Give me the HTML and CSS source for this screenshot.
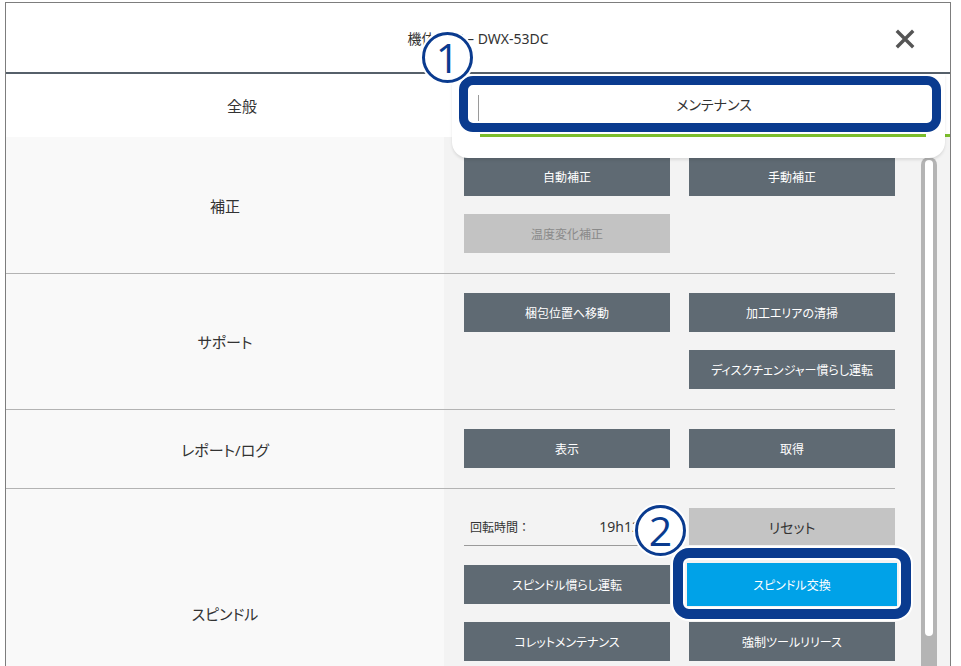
FILE: index.html
```html
<!DOCTYPE html>
<html lang="ja">
<head>
  <meta charset="UTF-8">
  <title>機体設定 - DWX-53DC</title>
  <link rel="stylesheet" href="styles.css">
</head>
<body>
  <div class="window">
    <!-- Title bar -->
    <header class="title-bar">
      <h1>機体設定 – DWX-53DC</h1>
      <button class="close" aria-label="閉じる">
        <svg width="20" height="20" viewBox="0 0 20 20">
          <path d="M3 3 L17 17 M17 3 L3 17" stroke="#555" stroke-width="3.4" stroke-linecap="square"/>
        </svg>
      </button>
    </header>

    <!-- Tabs -->
    <nav class="tabs">
      <div class="tab">全般</div>
      <div class="tab active">
        <span class="callout-panel"><span class="callout-line"></span></span>
        <span class="tab-sep"></span>
        <span class="tab-label">メンテナンス</span>
        <span class="callout-frame"></span>
        <span class="callout-num num-1">1</span>
      </div>
    </nav>

    <!-- Content -->
    <div class="content">
      <div class="list">
        <section class="group">
          <div class="group-label">補正</div>
          <div class="group-body">
            <button class="btn">自動補正</button>
            <button class="btn">手動補正</button>
            <button class="btn disabled">温度変化補正</button>
          </div>
        </section>

        <section class="group">
          <div class="group-label">サポート</div>
          <div class="group-body">
            <button class="btn">梱包位置へ移動</button>
            <button class="btn">加工エリアの清掃</button>
            <button class="btn col-2">ディスクチェンジャー慣らし運転</button>
          </div>
        </section>

        <section class="group">
          <div class="group-label">レポート/ログ</div>
          <div class="group-body">
            <button class="btn">表示</button>
            <button class="btn">取得</button>
          </div>
        </section>

        <section class="group spindle">
          <div class="group-label">スピンドル</div>
          <div class="group-body">
            <div class="runtime">
              <span class="runtime-label">回転時間 ：</span>
              <span class="runtime-value">19h12m</span>
            </div>
            <button class="btn reset">リセット</button>
            <button class="btn">スピンドル慣らし運転</button>
            <button class="btn selected">
              スピンドル交換
              <span class="callout-frame spindle-frame"></span>
              <span class="callout-num num-2">2</span>
            </button>
            <button class="btn">コレットメンテナンス</button>
            <button class="btn">強制ツールリリース</button>
          </div>
        </section>
      </div>

      <div class="side">
        <div class="scroll-track">
          <div class="scroll-thumb"></div>
        </div>
      </div>
    </div>
  </div>
</body>
</html>
```

FILE: styles.css
```css
/* General */
html, body {
  overflow: hidden;
}

body {
  margin: 0;
  background-color: #fff;
  color: #333;
  font-family: "Noto Sans", "Noto Sans CJK JP", sans-serif;
  font-feature-settings: "palt";
}

.window {
  box-sizing: border-box;
  width: 946px;
  height: 760px;
  margin: 2px 0 0 5px;
  border: 1px solid #7d7d7d;
  display: flex;
  flex-direction: column;
  overflow: hidden;
}

/* Title bar */
.title-bar {
  height: 69px;
  border-bottom: 2px solid #56606a;
  display: flex;
  align-items: center;
  justify-content: center;
  position: relative;
  flex-shrink: 0;
}

.title-bar h1 {
  margin: 0;
  font-size: 14px;
  font-weight: normal;
  color: #333;
}

.close {
  position: absolute;
  right: 35px;
  top: 26px;
  width: 20px;
  height: 20px;
  padding: 0;
  border: none;
  background: none;
  cursor: pointer;
}

.close svg {
  display: block;
}

/* Tabs */
.tabs {
  display: flex;
  height: 63px;
  flex-shrink: 0;
  background-color: #fff;
}

.tab {
  flex: 1;
  display: flex;
  align-items: center;
  justify-content: center;
  font-size: 15px;
  position: relative;
}

.tab.active {
  box-sizing: border-box;
  border-bottom: 3px solid #7bbd2c;
  font-size: 14px;
}

.tab-label {
  position: relative;
  z-index: 2;
}

.tab-sep {
  position: absolute;
  left: 0;
  top: 21px;
  width: 1px;
  height: 27px;
  background-color: #9a9a9a;
  z-index: 2;
}

/* Annotation callouts */
.callout-panel {
  position: absolute;
  left: -26px;
  top: 0;
  width: 493px;
  height: 84px;
  background-color: #fff;
  border-radius: 0 0 16px 16px;
  box-shadow: 0 2px 3px rgba(0, 0, 0, 0.1);
  z-index: 1;
}

.callout-line {
  position: absolute;
  left: 28px;
  top: 60px;
  width: 446px;
  height: 3px;
  background-color: #7bbd2c;
}

.callout-frame {
  position: absolute;
  left: -19px;
  top: 2px;
  width: 482px;
  height: 56px;
  box-sizing: border-box;
  border: 9px solid #0a3b8f;
  border-radius: 14px;
  box-shadow: 0 0 0 2px #fff, inset 0 0 0 2px #fff;
  z-index: 3;
}

.callout-num {
  position: absolute;
  box-sizing: border-box;
  width: 51px;
  height: 51px;
  border: 3px solid #0a3b8f;
  border-radius: 50%;
  background-color: #fff;
  box-shadow: 0 0 0 2px #fff;
  color: #0a3b8f;
  font-family: "Open Sans", "Noto Sans", sans-serif;
  font-size: 41px;
  line-height: 44px;
  text-align: center;
  z-index: 4;
}

.num-1 {
  left: -56px;
  top: -42px;
}

.num-2 {
  left: -54px;
  top: -60px;
}

.spindle-frame {
  left: -16px;
  top: -17px;
  width: 238px;
  height: 71px;
  border-width: 10px;
  border-radius: 16px;
}

/* Content */
.content {
  flex: 1;
  display: flex;
  background-color: #f3f3f3;
}

.list {
  width: 889px;
}

.group {
  display: flex;
  border-bottom: 1px solid #b3b3b3;
}

.group-label {
  width: 438px;
  background-color: #f9f9f9;
  display: flex;
  align-items: center;
  justify-content: center;
  font-size: 15px;
}

.group-body {
  flex: 1;
  display: grid;
  grid-template-columns: 206px 206px;
  grid-auto-rows: 39px;
  column-gap: 19px;
  row-gap: 18px;
  padding: 19px 0 20px 20px;
}

.group:first-child .group-body {
  padding-top: 20px;
}

.group.spindle .group-body {
  padding-bottom: 77px;
}

/* Buttons */
.btn {
  border: none;
  background-color: #5f6a73;
  color: #fff;
  font-family: inherit;
  font-feature-settings: "palt";
  font-size: 12px;
  padding: 0;
  cursor: pointer;
  position: relative;
}

.btn.col-2 {
  grid-column: 2;
}

.btn.disabled {
  background-color: #c3c3c3;
  color: #8a8a8a;
  cursor: default;
}

.btn.reset {
  background-color: #c4c4c4;
  color: #333;
  font-size: 14px;
  height: 37px;
}

.btn.selected {
  background-color: #00a2e8;
  box-shadow: 0 0 0 2px #00a2e8;
}

/* Spindle runtime */
.runtime {
  display: flex;
  align-items: center;
  height: 38px;
  border-bottom: 1px solid #9a9a9a;
  padding: 0 17px 0 6px;
  box-sizing: border-box;
}

.runtime-label {
  font-size: 12px;
}

.runtime-value {
  margin-left: auto;
  font-size: 14px;
}

/* Scrollbar */
.side {
  flex: 1;
}

.scroll-track {
  width: 16px;
  height: 600px;
  margin: 20px 0 0 26px;
  background-color: #b4b4b4;
  border-radius: 8px 8px 0 0;
  padding-top: 3px;
  box-sizing: border-box;
}

.scroll-thumb {
  width: 8px;
  height: 476px;
  margin: 0 auto;
  background-color: #fff;
  border-radius: 5px;
}
```
